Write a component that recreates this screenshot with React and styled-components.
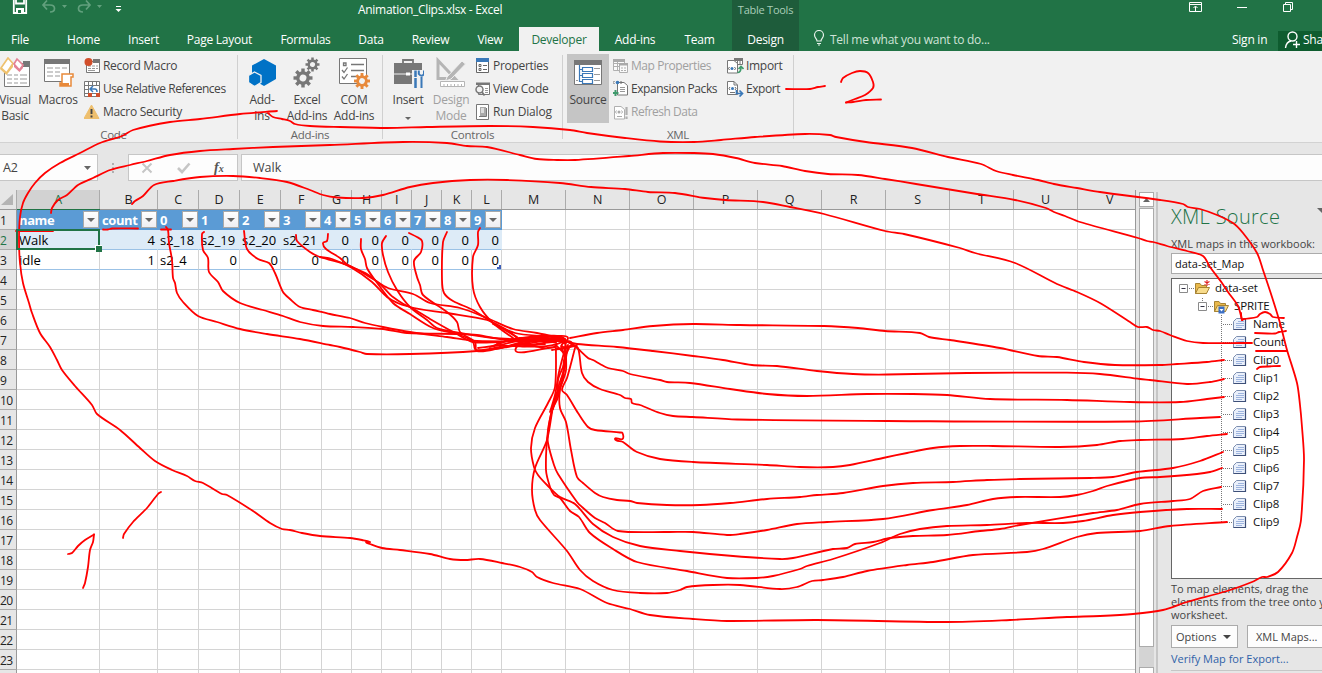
import React from "react";
import styled, { createGlobalStyle, css } from "styled-components";

const Global = createGlobalStyle`
  * { box-sizing: border-box; }
  body { margin: 0; overflow: hidden; }
`;

const UI = `"Open Sans", "Noto Sans", sans-serif`;

const Window = styled.div`
  position: relative;
  width: 1322px;
  height: 673px;
  overflow: hidden;
  display: flex;
  flex-direction: column;
  background: #e6e6e6;
  font: 12px/16px ${UI};
  letter-spacing: -0.25px;
  color: #444;
  white-space: nowrap;
`;

/* ---------- title bar and tabs ---------- */
const TitleBar = styled.div`
  display: flex;
  height: 27px;
  flex: none;
  background: #217346;
  color: #fff;
`;
const QuickAccess = styled.div`
  width: 358px;
  padding-left: 12px;
  svg { display: block; }
`;
const DocTitle = styled.div`
  width: 374px;
  padding-top: 2px;
  font-size: 12px;
  letter-spacing: -0.3px;
`;
const ToolContext = styled.div`
  width: 67px;
  padding-top: 2px;
  text-align: center;
  font-size: 11px;
  background: #1e5c3b;
  color: #a9cdb8;
`;
const WindowButtons = styled.div`
  margin-left: auto;
  width: 134px;
  svg { display: block; }
`;
const TabBar = styled.div`
  display: flex;
  height: 24px;
  flex: none;
  background: #217346;
  color: #fff;
  > * { flex: none; }
`;
const Tab = styled.div`
  width: ${(p) => p.$w}px;
  margin-left: ${(p) => p.$ml || 0}px;
  display: flex;
  justify-content: center;
  line-height: 25px;
  ${(p) => p.$active && css`background: #f1f1f1; color: #217346;`}
  ${(p) => p.$context && css`background: #1e5c3b;`}
`;
const TellMe = styled.div`
  display: flex;
  gap: 5px;
  margin-left: 14px;
  line-height: 25px;
  color: #cfe3d7;
  letter-spacing: -0.25px;
  svg { margin-top: 3px; }
`;
const SignIn = styled.div`
  margin-left: auto;
  width: 46px;
  line-height: 25px;
`;
const Share = styled.div`
  width: 44px;
  height: 20px;
  margin-top: 4px;
  padding-left: 6px;
  display: flex;
  gap: 2px;
  line-height: 17px;
  background: #0e5c2f;
  overflow: hidden;
  svg { flex: none; }
`;

/* ---------- ribbon ---------- */
const Ribbon = styled.div`
  display: flex;
  height: 92px;
  flex: none;
  background: #f1f1f1;
  border-bottom: 1px solid #d2d2d2;
`;
const Group = styled.div`
  width: ${(p) => p.$w}px;
  height: 84px;
  margin-top: 4px;
  display: flex;
  flex-direction: column;
  border-right: 1px solid #d0d0d0;
`;
const GroupBody = styled.div`
  display: flex;
  height: 71px;
  padding-left: ${(p) => p.$pl || 0}px;
  > * { flex: none; }
`;
const GroupLabel = styled.div`
  height: 13px;
  line-height: 17px;
  text-align: center;
  font-size: 11.5px;
  color: #666;
  padding-right: ${(p) => p.$pr || 0}px;
`;
const BigButton = styled.div`
  width: ${(p) => p.$w}px;
  margin-left: ${(p) => p.$ml || 0}px;
  height: ${(p) => (p.$on ? 69 : 71)}px;
  margin-top: ${(p) => (p.$on ? -1 : 0)}px;
  padding-top: ${(p) => (p.$on ? 3 : 2)}px;
  display: flex;
  flex-direction: column;
  align-items: center;
  text-align: center;
  background: ${(p) => (p.$on ? "#c5c5c5" : "none")};
  color: ${(p) => (p.$off ? "#a0a0a0" : "#444")};
  > svg { flex: none; display: block; margin-bottom: 3px; }
`;
const DropMark = styled.div`
  padding-top: 3px;
  line-height: 10px;
`;
const SmallColumn = styled.div`
  display: flex;
  flex-direction: column;
  margin-top: -1px;
  margin-left: ${(p) => p.$ml || 0}px;
  width: ${(p) => p.$w}px;
`;
const SmallButton = styled.div`
  display: flex;
  align-items: center;
  gap: 2px;
  height: 23px;
  color: ${(p) => (p.$off ? "#a0a0a0" : "#444")};
  letter-spacing: ${(p) => (p.$ls === undefined ? -0.3 : p.$ls)}px;
  svg { flex: none; }
`;

/* ---------- formula bar ---------- */
const FormulaBar = styled.div`
  display: flex;
  height: 27px;
  margin-top: 11px;
  flex: none;
  > * { flex: none; }
`;
const Box = styled.div`
  background: #fdfdfd;
  border: 1px solid #c6c6c6;
  height: 27px;
  line-height: 25px;
  font-size: 12.5px;
  display: flex;
`;
const NameBox = styled(Box)`
  width: 99px;
  margin-left: -1px;
  padding: 0 6px 0 3px;
  justify-content: space-between;
  align-items: center;
`;
const Grip = styled.div`
  width: 30px;
  padding: 8px 0 0 14px;
`;
const FormulaButtons = styled(Box)`width: 110px;`;
const FormulaInput = styled(Box)`
  margin-left: 3px;
  width: 1090px;
  padding-left: 11px;
  letter-spacing: 0;
`;

/* ---------- sheet ---------- */
const Main = styled.div`
  display: flex;
  margin-top: 9px;
  height: 483px;
  > * { flex: none; }
`;
const Sheet = styled.div`
  width: 1136px;
  height: 483px;
  border-right: 1px solid #999;
  overflow: hidden;
`;
const HeaderRow = styled.div`
  display: flex;
  height: 20px;
  border-bottom: 1px solid #999;
  background: #e6e6e6;
  > * { flex: none; }
`;
const Corner = styled.div`
  width: 17px;
  border-right: 1px solid #ababab;
  padding: 4px 0 0 1px;
  svg { display: block; }
`;
const ColHead = styled.div`
  width: ${(p) => p.$w}px;
  border-right: 1px solid #ababab;
  text-align: center;
  line-height: 20px;
  font-size: 12.5px;
  color: #222;
  ${(p) => p.$sel && css`
    background: #d2d2d2;
    color: #217346;
    box-shadow: 0 1px 0 #217346;
  `}
`;
const Row = styled.div`
  display: flex;
  height: 20px;
  > * { flex: none; }
`;
const RowHead = styled.div`
  width: 17px;
  border-right: 1px solid #999;
  border-bottom: 1px solid #ababab;
  background: ${(p) => (p.$sel ? "#d2d2d2" : "#e6e6e6")};
  color: ${(p) => (p.$sel ? "#217346" : "#222")};
  font-size: 12px;
  letter-spacing: -0.7px;
  line-height: 21px;
`;
const Cell = styled.div`
  position: relative;
  width: ${(p) => p.$w}px;
  padding: 0 2px;
  border-right: 1px solid #d4d4d4;
  border-bottom: 1px solid #d4d4d4;
  background: #fff;
  color: #000;
  font-size: 13px;
  letter-spacing: 0;
  line-height: 21px;
  text-align: ${(p) => (p.$num ? "right" : "left")};
  ${(p) => p.$kind === "head" && css`
    display: flex;
    justify-content: space-between;
    padding: 1px 1px 0 2px;
    background: #5b9bd5;
    border-color: #5b9bd5;
    color: #fff;
    font-weight: 700;
    letter-spacing: -0.4px;
    line-height: 19px;
  `}
  ${(p) => p.$kind === "band" && css`
    background: #ddebf7;
    border-right-color: #ddebf7;
    border-bottom-color: #9bc2e6;
  `}
  ${(p) => p.$kind === "last" && css`border-bottom-color: #9bc2e6;`}
`;
const FilterButton = styled.div`
  width: 16px;
  height: 17px;
  margin-right: -1px;
  flex: none;
  display: flex;
  align-items: center;
  justify-content: center;
  border: 1px solid #a9a9a9;
  background: linear-gradient(#fff, #eeeef2);
`;
const Selection = styled.div`
  position: absolute;
  z-index: 1;
  left: -1px;
  top: -1px;
  width: 84px;
  height: 21px;
  border: 2px solid #217346;
  &::after {
    content: "";
    position: absolute;
    right: -4px;
    bottom: -4px;
    width: 6px;
    height: 6px;
    background: #217346;
    border: 1px solid #fff;
    border-width: 1px 0 0 1px;
  }
`;
const TableCorner = styled.div`
  position: absolute;
  right: 0;
  bottom: 0;
  width: 4px;
  height: 4px;
  border: 2px solid #3f5fb8;
  border-left: 0;
  border-top: 0;
`;

/* ---------- scroll bar ---------- */
const ScrollBar = styled.div`
  width: 15px;
  margin: 2px 0 0 3px;
  display: flex;
  flex-direction: column;
  background: #d4d4d4;
`;
const ScrollPart = styled.div`
  flex: none;
  height: ${(p) => p.$h}px;
  margin-top: ${(p) => p.$mt || 0}px;
  border: 1px solid #ababab;
  background: #fff;
  display: flex;
  align-items: center;
  justify-content: center;
`;

/* ---------- XML pane ---------- */
const Pane = styled.div`
  margin-left: 2px;
  width: 166px;
  margin-top: 2px;
  padding-left: 13px;
  border-left: 2px solid #c6c6c6;
  overflow: hidden;
`;
const PaneTitle = styled.div`
  display: flex;
  justify-content: space-between;
  font-size: 20px;
  font-weight: 300;
  letter-spacing: 0.3px;
  line-height: 26px;
  height: 44px;
  padding-top: 12px;
  color: #217346;
  svg { flex: none; margin: -2px -5px 0 0; }
`;
const PaneLabel = styled.div`
  font-size: 11px;
  line-height: 16px;
  height: 15px;
  letter-spacing: 0;
`;
const MapSelect = styled.div`
  width: 170px;
  height: 21px;
  margin-top: 2px;
  padding-left: 3px;
  border: 1px solid #ababab;
  background: #fff;
  color: #111;
  font-size: 11px;
  line-height: 19px;
  letter-spacing: 0;
`;
const Tree = styled.div`
  width: 170px;
  height: 301px;
  margin-top: 4px;
  border: 1px solid #666;
  background: #fff;
  color: #111;
`;
const TreeRow = styled.div`
  display: flex;
  align-items: center;
  height: 18px;
  padding-left: ${(p) => p.$pl}px;
  font-size: 11.5px;
  letter-spacing: -0.1px;
  svg { flex: none; }
  span { margin-left: ${(p) => p.$gap}px; }
`;
const PaneHint = styled.div`
  margin-top: 3px;
  font-size: 11px;
  line-height: 13px;
  letter-spacing: 0;
`;
const PaneButtons = styled.div`
  display: flex;
  gap: 9px;
  margin-top: 4px;
`;
const PaneButton = styled.div`
  flex: none;
  width: ${(p) => p.$w}px;
  height: 23px;
  padding-left: ${(p) => p.$pl}px;
  display: flex;
  align-items: center;
  gap: 6px;
  border: 1px solid #ababab;
  background: #fdfdfd;
  font-size: 11px;
  letter-spacing: 0;
`;
const PaneLink = styled.div`
  margin-top: 3px;
  padding-bottom: 3px;
  border-bottom: 1px solid #c6c6c6;
  font-size: 11px;
  letter-spacing: 0;
  color: #2f62a8;
`;

const Ink = styled.svg`
  position: absolute;
  left: 0;
  top: 0;
  pointer-events: none;
  fill: none;
  stroke: #f00;
  stroke-width: 1.8;
  stroke-linecap: round;
  stroke-linejoin: round;
`;

/* ---------- icons ---------- */
const Arrow = ({ c = "#666", w = 8, h = 4 }) => (
  <svg width={w} height={h}><path d={`M0 0H${w}L${w / 2} ${h}Z`} fill={c} /></svg>
);
const QatIcons = () => (
  <svg width="120" height="20" fill="none">
    <path d="M1.8 -2V13H14.2V-2M4 -2V3.5H12V-2" stroke="#fff" strokeWidth="1.8" />
    <path d="M4 8H12V13H4Z" fill="#fff" /><path d="M6 10H9V13H6Z" fill="#217346" />
    <g stroke="#62a07d" strokeWidth="1.7">
      <path d="M31 5H38C44 5 44 12 38 12M35 0.5L31 5L35 9.5" />
      <path d="M78 5H71C65 5 65 12 71 12M74 0.5L78 5L74 9.5" />
    </g>
    <path d="M50 5H55L52.5 8ZM85 5H90L87.5 8Z" fill="#62a07d" />
    <path d="M104 6.5H109" stroke="#fff" /><path d="M103.500 9H109.500L106.500 12Z" fill="#fff" />
  </svg>
);
const WinIcons = () => (
  <svg width="134" height="20" fill="none" stroke="#fff">
    <path d="M1.500 2.500H13.500V11.500H1.500ZM1.500 4.500H13.500M7.500 11V6.500M5.500 8L7.500 6L9.500 8" />
    <path d="M49 7.500H59M95.500 4.500H102.500V11.500H95.500ZM97.500 4V2.500H104.500V9.500H103" />
  </svg>
);
const Bulb = () => (
  <svg width="12" height="16" viewBox="0 0 12 16" fill="none" stroke="#e6f1ea">
    <path d="M4 11C4 8.500 1.500 8 1.500 5A4.500 4.500 0 0 1 10.500 5C10.500 8 8 8.500 8 11Z" strokeWidth="1.200" />
    <path d="M4 13.500H8M5 15H7" strokeWidth="1.200" />
  </svg>
);
const Person = () => (
  <svg width="17" height="18" viewBox="0 0 17 18" fill="none" stroke="#fff" strokeWidth="1.400">
    <circle cx="8.500" cy="5.500" r="4.500" /><path d="M1.500 17C2 13 4 10.500 7 10M12.500 10V17M9 13.500H16" />
  </svg>
);
const VisualBasicIcon = () => (
  <svg width="36" height="32" viewBox="0 0 36 32">
    <path d="M7.500 10.500V29.500H32.500V6.500H24" fill="#fff" stroke="#7a7a7a" />
    <path d="M26 4H33V10H26Z" fill="#777" />
    <path d="M10 18H15M17 18H21M23 18H30M10 22H15M17 22H21M23 22H30M10 26H15M17 26H21M23 26H30" stroke="#999" />
    <path d="M11 1L16 6.500L9.500 16L4 11Z" fill="#fff" stroke="#eec16e" strokeWidth="1.700" />
    <path d="M4 11L9.500 16L16 6.500V10L9.500 18L3 12Z" fill="#eec16e" />
    <path d="M20 2L26 8L22.500 13L17 7Z" fill="#fff" stroke="#e48295" strokeWidth="1.700" />
    <path d="M17 7L22.500 13L26 8V11L22.500 15L17 10Z" fill="#e48295" />
  </svg>
);
const MacrosIcon = () => (
  <svg width="32" height="32" viewBox="0 0 32 32">
    <path d="M2.500 4.500H27.500V24.500H2.500Z" fill="#fff" stroke="#777" />
    <path d="M2 2H28V7H2Z" fill="#777" />
    <path d="M5 11H11M13 11H18M20 11H25M5 15H11M13 15H18M5 19H11M13 19H18" stroke="#999" />
    <path d="M20 17H31V20H29V29H18V26H20Z" fill="#fff" stroke="#e8893a" strokeWidth="1.500" />
    <path d="M18 26H27V29H18Z" fill="#e8893a" />
  </svg>
);
const RecordIcon = () => (
  <svg width="17" height="16"><path d="M2.500 3.500H15.500V14.500H2.500Z" fill="#fff" stroke="#777" /><path d="M9 1H16V5H9Z" fill="#777" /><path d="M4 8H7M8 8H11M12 8H14M4 10.500H7M8 10.500H11M12 10.500H14M4 12.500H11" stroke="#999" /><circle cx="4.500" cy="4" r="4" fill="#d24f2b" /></svg>
);
const RelativeIcon = () => (
  <svg width="17" height="16" fill="none"><path d="M.5 .5H15.500V15.500H.5ZM.5 4.500H15M.5 8.500H4M.5 12.500H15M4.500 .5V15M8.500 .5V4M12.500 .5V4" fill="#fff" stroke="#777" /><path d="M5 5H15V12H5Z" fill="#fff" /><path d="M6 8H11Q13 8 13 11M9 5L6 8L9 11" stroke="#3a78b8" strokeWidth="1.500" /><path d="M4 12H8V16H4ZM12 12H16V16H12Z" fill="#d24f2b" /></svg>
);
const WarnIcon = () => (
  <svg width="17" height="16"><path d="M7.500 1L15 14.500H0Z" fill="#eebf6e" stroke="#eebf6e" strokeLinejoin="round" /><path d="M7.500 5V10M7.500 11.500V13.500" stroke="#444" strokeWidth="1.900" /></svg>
);
const AddinsIcon = () => (
  <svg width="32" height="32" viewBox="0 0 32 32">
    <path d="M18 2L30 8.500V22L18 29L6 22V8.500Z" fill="#0072c6" />
    <path d="M8.500 15L15 18.500V25.500L8.500 29.500L2.500 25.500V18.500Z" fill="#0072c6" stroke="#f1f1f1" strokeWidth="1.300" />
  </svg>
);
const Gear = ({ x, y, r, c, hole = "#f1f1f1" }) => (
  <g transform={`translate(${x} ${y}) rotate(22.5)`}>
    {[0, 45, 90, 135].map((a) => (
      <path key={a} d={`M${-r} 0H${r}`} transform={`rotate(${a + 22.5})`} stroke={c} strokeWidth={r * 0.36} />
    ))}
    <circle r={r * 0.72} fill={c} /><circle r={r * 0.36} fill={hole} />
  </g>
);
const GearsIcon = () => (
  <svg width="32" height="32" viewBox="0 0 32 32"><Gear x={12} y={21} r={9.500} c="#777" /><Gear x={21.500} y={7.500} r={7} c="#777" /></svg>
);
const ComIcon = () => (
  <svg width="32" height="32" viewBox="0 0 32 32" fill="none">
    <path d="M1.500 1.500H28.500V26.500H1.500Z" fill="#fff" stroke="#777" />
    <path d="M5.500 6H8V8.500H5.500ZM13 7.500H26M13 13.500H26M13 19.500H20M4 13L6 15.500L9.500 10.500M4 19.500L6 22L9.500 17" stroke="#777" strokeWidth="1.300" />
    <Gear x={24} y={24} r={8} c="#e8893a" />
  </svg>
);
const InsertIcon = () => (
  <svg width="32" height="32" viewBox="0 0 32 32" fill="none">
    <path d="M11 6V3H21V6" stroke="#777" strokeWidth="1.800" />
    <path d="M2 6H30V27H2Z" fill="#777" /><path d="M2 17H14M18 17H22" stroke="#f1f1f1" /><path d="M14 15.500H18V18.500H14Z" fill="#fff" />
    <path d="M20 13H32V31H20Z" fill="#f1f1f1" />
    <path d="M23.500 13.500V20M23.500 21V31" stroke="#3a78b8" strokeWidth="2.500" /><path d="M29.500 20V31M26.800 13.500V17Q29.500 20.500 32 17V13.500" stroke="#3a78b8" strokeWidth="2" />
  </svg>
);
const DesignIcon = () => (
  <svg width="32" height="32" viewBox="0 0 32 32" fill="none">
    <path d="M3 3.500V21.500H20Z" stroke="#b5b5b5" strokeWidth="3" />
    <path d="M12 20L27 4L30.500 7L16 22L10.500 24Z" fill="#b5b5b5" stroke="#f1f1f1" />
    <path d="M5.500 24.500H29.500V29.500H5.500ZM9 27V29M12.500 27V29M16 27V29M19.500 27V29M23 27V29M26.500 27V29" fill="#fff" stroke="#b5b5b5" />
  </svg>
);
const PropsIcon = () => (
  <svg width="16" height="16"><path d="M1.500 2.500H13.500V14.500H1.500Z" fill="#fff" stroke="#666" /><path d="M1 0H14V4H1Z" fill="#3a78b8" /><path d="M4 6.500H6V8.500H4ZM4 10.500H6V12.500H4ZM8 7.500H12M8 11.500H12" fill="none" stroke="#666" /></svg>
);
const CodeIcon = () => (
  <svg width="16" height="16" fill="none"><path d="M3.500 3.500H14.500V13.500H3.500Z" fill="#fff" stroke="#777" /><path d="M1 1.500H15V4H1Z" fill="#777" /><path d="M10 7.500H13M10 9.500H13M10 11.500H13" stroke="#999" /><circle cx="4.500" cy="8.500" r="3.500" fill="#f1f1f1" stroke="#777" strokeWidth="1.500" /><path d="M7 11L9.500 14.500" stroke="#777" strokeWidth="1.800" /></svg>
);
const RunIcon = () => (
  <svg width="16" height="16"><path d="M1.500 .5H13.500V15.500H1.500Z" fill="#fff" stroke="#777" /><path d="M5 3H11V13H5Z" fill="#aaa" /><path d="M6 4H9V9H6Z" fill="#ddd" /><path d="M4 12.500H11.500V4" fill="none" stroke="#777" /></svg>
);
const SourceIcon = () => (
  <svg width="32" height="32" viewBox="0 0 32 32" fill="none">
    <path d="M2.500 5.500H29.500V27.500H2.500Z" fill="#fff" stroke="#777" /><path d="M2 3H30V8H2Z" fill="#777" />
    <path d="M22 11.500H28M22 17.500H28M22 23.500H28M4 23.500H6" stroke="#999" />
    <path d="M7.500 8V24.500H10M7.500 12.500H10M7.500 18.500H10M10.500 10.500H20.500V14.500H10.500ZM10.500 16.500H20.500V20.500H10.500ZM10.500 22.500H20.500V26.500H10.500Z" stroke="#3a78b8" strokeWidth="1.200" />
  </svg>
);
const MapPropsIcon = () => (
  <svg width="16" height="16" fill="none" stroke="#b0b0b0"><path d="M.5 1.500H11.500V12.500H.5ZM.5 8.500H11M.5 5.500H11M4.500 1V12" fill="#fafafa" /><path d="M0 1H12V4H0Z" fill="#aaa" stroke="none" /><path d="M6.500 5.500H14.500V14.500H6.500Z" fill="#fafafa" /><path d="M6 5H15V7.500H6Z" fill="#aaa" stroke="none" /><path d="M8 10H10M11 10H13M8 12.500H10M11 12.500H13" /></svg>
);
const Page = ({ x = 1, c = "#777" }) => (
  <path d={`M${x}.500 2.500H${x + 7}L${x + 10}.500 5.500V15H${x}.500Z`} fill="#fff" stroke={c} />
);
const ExpansionIcon = () => (
  <svg width="16" height="17" fill="none"><Page x={4} /><path d="M7 7.500H12M7 9.500H12M7 11.500H12" stroke="#999" /><circle cx="4.500" cy="2.500" r="1.800" fill="#3a78b8" /><path d="M1.500 1L0 2.500L1.500 4M7.500 1L9 2.500L7.500 4" stroke="#666" /><path d="M2.500 10V16M-.5 13H5.500" stroke="#3f9a6c" strokeWidth="2" /></svg>
);
const RefreshIcon = () => (
  <svg width="16" height="16" fill="none"><Page x={1} c="#b0b0b0" /><circle cx="6" cy="8" r="1.500" fill="#aaa" /><path d="M3.500 6.500L2.500 8L3.500 9.500M8.500 6.500L9.500 8L8.500 9.500M4 12.500H9" stroke="#aaa" /><path d="M13.500 3V11M13.500 12.500V15" stroke="#b0b0b0" strokeWidth="2.200" /></svg>
);
const ImportIcon = () => (
  <svg width="17" height="16" fill="none"><path d="M7.500 .5H15.500V6.500H7.500ZM10.500 1V6M13 1V6" fill="#fff" stroke="#777" /><path d="M7 0H16V3H7Z" fill="#777" /><Page x={0} /><circle cx="5" cy="10.500" r="1.500" fill="#3a78b8" /><path d="M2.500 9L1.500 10.500L2.500 12M7.500 9L8.500 10.500L7.500 12" stroke="#666" /><path d="M10.500 14.500Q14 14.500 14 9M11.500 11L14 8.500L16.500 11" stroke="#3f9a6c" strokeWidth="1.600" /></svg>
);
const ExportIcon = () => (
  <svg width="17" height="16" fill="none"><path d="M.5 .5H7L10.500 4V13.500H.5Z" fill="#fff" stroke="#777" /><path d="M7 .5V4H10.500M3 11.500H8" stroke="#777" /><circle cx="5.500" cy="7.500" r="1.500" fill="#3a78b8" /><path d="M3 6L2 7.500L3 9M8 6L9 7.500L8 9" stroke="#666" /><path d="M9.500 9V12.500H15M12.500 9.500L15.500 12.500L12.500 15.500" stroke="#3a78b8" strokeWidth="1.700" /></svg>
);
const FxIcons = () => (
  <svg width="108" height="25" fill="none">
    <path d="M13.500 8.500L22.500 17.500M22.500 8.500L13.500 17.500" stroke="#c6c6c6" strokeWidth="2" />
    <path d="M49 13L53 17L60.500 8.500" stroke="#c6c6c6" strokeWidth="2.600" />
    <text x="85" y="16.500" fill="#555" stroke="none" fontFamily="Liberation Serif, serif" fontStyle="italic" fontWeight="bold" fontSize="14" letterSpacing="0">f<tspan fontSize="10" dx="0">x</tspan></text>
  </svg>
);
const Folder = ({ mark }) => (
  <svg width="17" height="16" viewBox="0 0 17 16">
    <path d="M1.500 13.500V3.500H6L7.500 5.500H12.500V13.500Z" fill="#e9b94c" stroke="#a88434" />
    <path d="M1.500 13.500L4.500 7.500H15.500L12.500 13.500Z" fill="#f8dc8c" stroke="#a88434" />
    {mark === "star" && <path d="M13 0V6M10.500 1.500L15.500 4.500M15.500 1.500L10.500 4.500" stroke="#e02020" strokeWidth="1.100" />}
    {mark === "rep" && <g><path d="M5.500 8.500H11.500V15.500H5.500Z" fill="#3c6fc4" /><path d="M6.500 11H10.500L8.500 13.500Z" fill="#fff" /></g>}
  </svg>
);
const NodeIcon = () => (
  <svg width="14" height="12" viewBox="0 0 14 12"><path d="M3.500 .5H12.500V11.500H.5V3.500Z" fill="#eaf0fb" stroke="#7d8fb0" /><path d="M.5 11.500H12.500V1" fill="none" stroke="#3d4f78" strokeWidth="1.200" /><path d="M5 3.500H11M3 5.500H11M3 7.500H11M3 9.500H9" stroke="#9db4de" /></svg>
);
const Expander = ({ pre }) => (
  <svg width="15" height="18"><path d="M.5 5.500H8.500V13.500H.5Z" fill="#fff" stroke="#8a8a8a" /><path d="M2.500 9.500H6.500" stroke="#334" /><path d="M10 9.500H15" stroke="#777" strokeDasharray="1 1" />{pre && <path d="M4.500 -1V5" stroke="#777" strokeDasharray="1 1" />}</svg>
);
const Branch = ({ last }) => (
  <svg width="12" height="18"><path d={`M.5 0V${last ? 10 : 18}M2 9.500H11`} stroke="#777" strokeDasharray="1 1" /></svg>
);

/* ---------- data ---------- */
const columns = [
  ["A", 83], ["B", 58], ["C", 41], ["D", 41], ["E", 41], ["F", 41],
  ["G", 30], ["H", 30], ["I", 30], ["J", 30], ["K", 30], ["L", 30],
  ["M", 64], ["N", 64], ["O", 64], ["P", 64], ["Q", 64], ["R", 64],
  ["S", 64], ["T", 64], ["U", 64], ["V", 64],
];
const data = {
  1: ["name", "count", "0", "1", "2", "3", "4", "5", "6", "7", "8", "9"],
  2: ["Walk", 4, "s2_18", "s2_19", "s2_20", "s2_21", 0, 0, 0, 0, 0, 0],
  3: ["idle", 1, "s2_4", 0, 0, 0, 0, 0, 0, 0, 0, 0],
};
const kinds = { 1: "head", 2: "band", 3: "last" };
const nodes = ["Name", "Count", "Clip0", "Clip1", "Clip2", "Clip3", "Clip4", "Clip5", "Clip6", "Clip7", "Clip8", "Clip9"];
const tabs = [
  ["File", 40], ["Home", 59, 14], ["Insert", 61], ["Page Layout", 91], ["Formulas", 81],
  ["Data", 50], ["Review", 69], ["View", 50], ["Developer", 80, 4], ["Add-ins", 68, 2],
  ["Team", 61], ["Design", 67, 2],
];

/* Pen strokes, each a list of x,y pairs. */
const strokes = [
  "277,111 240,114 200,119 170,122 133,130 122,136 100,143 80,153 60,163 45,173 35,183 28,193 23,203 20,217 19,240 20,263 23,283 29,303 32,313 40,333 50,347 57,360 62,370 75,386 92,405 97,414 120,430 140,448 155,461 172,470 187,476 195,481 203,483 222,494 227,495 253,511 270,523 282,529 290,530 302,533 320,536 350,538 362,540 370,542 366,542 370,544 382,548 400,550 430,554 450,559 465,560 480,559 502,563 520,567 532,572 537,577 553,583 580,589 607,603 630,609 650,615 693,619 727,621 817,620 947,622 1010,620 1067,617 1100,616 1133,614 1163,610 1187,602 1227,591 1252,582 1262,577 1267,577 1278,572 1292,553 1297,537 1301,520 1304,460 1302,427 1300,405 1297,383 1287,350 1280,323 1272,297 1263,270 1257,253 1243,233 1233,223 1217,215 1200,209 1188,207 1183,204 1160,200 1100,192 1077,188 1054,184 1038,180 1013,175 996,171 981,164 948,157 912,148 866,142 836,137 830,135 805,134 755,137 721,140 694,142 660,141.5 625,138 587,133 570,130 533,127 490,126 427,127 387,128 340,127 310,126 295,124 290,121 282,119 273,117 268,113",
  "51,213 52,208 58,200 67,195 78,185 93,178 110,170 130,165 147,161 170,155 200,151 233,149 273,147 330,145 403,142 447,143 467,146 487,147 520,155 537,159 557,160 575,160 629,156 663,153 694,153 713,154 736,158 755,163 782,166 805,171 828,174 858,175 885,179 916,184 977,194 1015,200 1046,208 1054,212 1065,216 1080,222 1138,238 1147,241 1153,242 1167,246 1187,251 1203,256 1210,267 1222,283 1228,292 1238,306 1242,320",
  "1241,313 1242,320 1244,319 1257,317 1260,314 1265,312 1270,314 1273,317 1284,318",
  "132,204 135,201 143,196 154,185 173,181 200,177 233,176 260,178 287,182 310,190 323,195 337,197.5 363,198 383,195 410,187 433,183 470,180 507,180 560,183 591,187 625,189 648,192 675,193 705,198 725,200 763,202 790,207 824,214 885,231 904,234 960,248 975,253 1015,263 1057,284 1077,292 1100,303 1130,322 1138,327 1147,327 1153,330 1160,331 1170,335 1187,341 1203,343 1242,343 1252,343",
  "1255,333 1275,333.5 1279,332 1286,331",
  "1256,351 1287,351",
  "1257,369 1260,367 1280,366",
  "16,231 53,231", "103,229.5 108,229.5 112,228.5 138,228.5", "161,229.5 171,229.5",
  "166,227 168,230 169,243 172,260 173,278 175,283 177,293 183,302 198,316 217,322 240,329 267,334 300,339 330,345 340,347 360,352 367,354 410,354 477,351 507,347 560,338",
  "204,232 202,234 203,250 208,258 209,272 218,282 223,291 240,303 263,310 283,316 300,322 323,326 353,327 383,329 407,333 460,334 477,335 507,340 560,340",
  "244,231 247,249 258,259 269,263 275,273 283,292 290,299 300,307 313,310 330,314 350,318 365,323 383,327 410,332 447,337 477,341 560,341",
  "296,235 297,241 310,252 320,257 350,266 373,279 388,288 413,294 430,303 460,308 487,318 513,329 537,333 565,339",
  "328,234 327,241 323,243 326,249 340,258 348,265 367,274 382,286 393,297 410,307 447,313 487,320 507,330 517,338",
  "320,257 332,259 352,268 372,282 387,297 400,304 410,307 430,319 455,333 473,342 500,342",
  "361,239 361,249 365,259 367,268 375,280 393,303 410,314 433,328 460,335 473,342 476,350 500,347",
  "386,236 382,243 383,255 388,272 397,290 410,307 427,320 437,328 460,333 493,338 550,340",
  "409,233 417,237 422,241 421,252 414,261 417,277 420,285 423,295 447,312 457,322 460,332 475,342 477,351 500,348 530,342",
  "447,232 443,242 442,280 444,293 453,301 473,310 493,323 517,337",
  "480,228 478,232 478,245 473,257 473,288 480,307 493,323 513,338",
  "478,348 500,345 540,336 564,340", "490,347 520,338 560,343 500,346", "497,343 530,337 560,338 520,342 556,345 516,348 555,347",
  "493,324 515,333 540,336 562,337 566,343 550,339 520,344 545,344", "505,340 558,341 572,344 556,349",
  "500,348 535,339 560,336 568,338 562,346 575,346", "552,350 566,348 577,345",
  "570,338 597,333 623,330 653,326 693,324 740,325 824,326 858,328 885,331 920,333 929,337 950,340 1000,348 1038,356 1057,357 1084,362 1115,365 1160,365 1177,364 1207,362 1224,360",
  "568,342 577,344 617,347 653,351 693,356 723,360 752,365 777,366 817,371 853,374 887,374.5 967,373 1067,372.7 1100,374 1140,379 1150,380 1187,384 1210,382 1224,379",
  "568,342 577,348 588,358 593,360 600,364 608,368 623,371 630,374 660,380 667,382 690,383 730,389 767,394 807,396 867,394 913,394 947,395 990,399 1067,400 1130,402 1180,402 1207,399 1224,397",
  "572,344 578,348 582,373 588,382 600,389 620,395 625,398 631,399 632,403 640,405 660,413 673,416 693,417 737,419.5 887,421 1133,421.5 1200,418 1220,417",
  "575,348 567,378 562,390 567,395 578,413 588,427 595,430 620,432.5 622.5,433 622.5,439 615,439 623,442 637,452 660,459 693,462 767,465 800,467 833,467 850,465 883,458 907,453 933,448 960,446 993,446 1060,447 1097,445 1120,441 1140,440 1183,439 1207,436 1227,434",
  "565,340 566,370 560,390 560,408 566,422 571,450 577,477 583,483 595,493 603,497 617,500 630,501 637,503 667,505 700,505 730,503 767,499 800,497 817,495 843,493 883,486 913,483 953,482 987,480 1020,479 1090,478 1113,477 1137,472 1173,468 1200,461 1223,452",
  "561,346 565,360 558,380 558,397 552,410 548,433 548,443 554,465 558,474 577,502 582,507 595,518 605,523 618,531 667,532 693,532 727,535 740,534 767,530 797,524 827,522 883,519 933,510 967,505 993,499 1017,497 1060,497 1077,495 1093,491 1107,486 1140,478 1160,477 1197,474 1210,472 1222,468",
  "556,345 555,387 548,403 535,428 531,448 534,467 538,475 548,486 560,497 575,504 593,524 613,537 640,546 680,551 733,556 780,559 793,558 833,549 847,548 855,544 873,542 890,538 913,536 947,535 980,531 1000,529 1020,525 1093,513 1117,510 1140,504 1173,501 1190,499 1203,491 1221,487",
  "568,345 562,380 553,407 548,430 546,470 550,487 554,495 560,498 570,511 579,517 590,533 613,549 637,562 687,571 727,578 757,578 773,576 800,569 807,566 833,559 880,543 900,534 920,529 947,526 987,525 1027,523 1063,523 1083,521 1113,515 1140,512 1187,509 1222,509",
  "556,345 566,358 559,385 553,407 547,440 535,468 532,490 535,510 540,520 567,551 580,570 593,581 613,590 640,593 667,593 680,590 687,587 713,585 740,585 780,589 797,587 812,581 823,580 843,577 867,571 907,565 933,562 973,555 1027,552 1043,549 1077,537 1097,533 1140,531 1170,526 1227,522",
  "566,345 559,372 555,395 550,412", "570,346 564,360 563,378 557,395 553,409",
  "68,554 72,553 78,546 85,540 94,534.5",
  "94,534.5 93,542 90,550 88,567 85,583 83,588",
  "123,538 124,534 133,522 147,508 158,494 161,492",
  "786,89 810,89 818,87 825,86",
  "841,82 843,78 852,73 860,71 868,73 873,82 873,88 865,95 855,99 846,102.500",
  "846,102.500 853,102 866,100 881,99.500",
];
/* Rounds a stroke slightly at its inner points, keeping the corners tight. */
const toPath = (s) => {
  const p = s.split(" ").map((q) => q.split(",").map(Number));
  let d = `M${p[0]}`;
  for (let i = 0; i < p.length - 1; i++) {
    const a = p[i - 1] || p[i], b = p[i], c = p[i + 1], e = p[i + 2] || c;
    const len = Math.hypot(c[0] - b[0], c[1] - b[1]);
    const t = (u, v) => {
      const m = Math.hypot(v[0] - u[0], v[1] - u[1]) || 1;
      return [((v[0] - u[0]) / m) * len * 0.3, ((v[1] - u[1]) / m) * len * 0.3];
    };
    const t1 = t(a, c), t2 = t(b, e);
    d += `C${b[0] + t1[0]} ${b[1] + t1[1]} ${c[0] - t2[0]} ${c[1] - t2[1]} ${c[0]} ${c[1]}`;
  }
  return d;
};

const Small = ({ icon, off, ls, children }) => (
  <SmallButton $off={off} $ls={ls}>{icon}{children}</SmallButton>
);

export default function App() {
  return (
    <Window>
      <Global />
      <TitleBar>
        <QuickAccess><QatIcons /></QuickAccess>
        <DocTitle>Animation_Clips.xlsx - Excel</DocTitle>
        <ToolContext>Table Tools</ToolContext>
        <WindowButtons><WinIcons /></WindowButtons>
      </TitleBar>
      <TabBar>
        {tabs.map(([t, w, ml]) => (
          <Tab key={t} $w={w} $ml={ml} $active={t === "Developer"} $context={t === "Design"}>{t}</Tab>
        ))}
        <TellMe><Bulb />Tell me what you want to do...</TellMe>
        <SignIn>Sign in</SignIn>
        <Share><Person />Share</Share>
      </TabBar>

      <Ribbon>
        <Group $w={238}>
          <GroupBody>
            <BigButton $w={36} $ml={-3}><VisualBasicIcon /><span>Visual</span><span>Basic</span></BigButton>
            <BigButton $w={42} $ml={4}><MacrosIcon />Macros</BigButton>
            <SmallColumn $ml={5} $w={150}>
              <Small icon={<RecordIcon />}>Record Macro</Small>
              <Small icon={<RelativeIcon />} ls={-0.47}>Use Relative References</Small>
              <Small icon={<WarnIcon />}>Macro Security</Small>
            </SmallColumn>
          </GroupBody>
          <GroupLabel $pr={10}>Code</GroupLabel>
        </Group>
        <Group $w={145}>
          <GroupBody $pl={2}>
            <BigButton $w={44}><AddinsIcon /><span>Add-</span><span>ins</span></BigButton>
            <BigButton $w={46}><GearsIcon /><span>Excel</span><span>Add-ins</span></BigButton>
            <BigButton $w={48}><ComIcon /><span>COM</span><span>Add-ins</span></BigButton>
          </GroupBody>
          <GroupLabel>Add-ins</GroupLabel>
        </Group>
        <Group $w={180}>
          <GroupBody $pl={5}>
            <BigButton $w={40}><InsertIcon />Insert<DropMark><Arrow w={6} h={3} /></DropMark></BigButton>
            <BigButton $w={40} $ml={3} $off><DesignIcon /><span>Design</span><span>Mode</span></BigButton>
            <SmallColumn $ml={4} $w={90}>
              <Small icon={<PropsIcon />}>Properties</Small>
              <Small icon={<CodeIcon />}>View Code</Small>
              <Small icon={<RunIcon />} ls={-0.15}>Run Dialog</Small>
            </SmallColumn>
          </GroupBody>
          <GroupLabel>Controls</GroupLabel>
        </Group>
        <Group $w={231}>
          <GroupBody $pl={4}>
            <BigButton $w={42} $on><SourceIcon />Source</BigButton>
            <SmallColumn $ml={4} $w={114}>
              <Small icon={<MapPropsIcon />} off ls={-0.42}>Map Properties</Small>
              <Small icon={<ExpansionIcon />} ls={-0.42}>Expansion Packs</Small>
              <Small icon={<RefreshIcon />} off ls={-0.5}>Refresh Data</Small>
            </SmallColumn>
            <SmallColumn $w={60}>
              <Small icon={<ImportIcon />}>Import</Small>
              <Small icon={<ExportIcon />} ls={-0.45}>Export</Small>
            </SmallColumn>
          </GroupBody>
          <GroupLabel>XML</GroupLabel>
        </Group>
      </Ribbon>

      <FormulaBar>
        <NameBox>A2<Arrow w={7} /></NameBox>
        <Grip><svg width="3" height="11"><path d="M0 0H2V2H0ZM0 4H2V6H0ZM0 8H2V10H0Z" fill="#b0b0b0" /></svg></Grip>
        <FormulaButtons><FxIcons /></FormulaButtons>
        <FormulaInput>Walk</FormulaInput>
      </FormulaBar>

      <Main>
        <Sheet>
          <HeaderRow>
            <Corner><svg width="13" height="12"><path d="M12 0V11H0Z" fill="#b4b4b4" /></svg></Corner>
            {columns.map(([c, w], i) => <ColHead key={c} $w={w} $sel={i === 0}>{c}</ColHead>)}
          </HeaderRow>
          {Array.from({ length: 24 }, (_, r) => r + 1).map((r) => (
            <Row key={r}>
              <RowHead $sel={r === 2}>{r < 24 ? r : null}</RowHead>
              {columns.map(([c, w], i) => {
                const v = data[r] && data[r][i];
                return (
                  <Cell key={c} $w={w} $kind={i < 12 ? kinds[r] : undefined} $num={typeof v === "number"}>
                    {v}
                    {r === 1 && i < 12 && <FilterButton><Arrow /></FilterButton>}
                    {r === 2 && i === 0 && <Selection />}
                    {r === 3 && i === 11 && <TableCorner />}
                  </Cell>
                );
              })}
            </Row>
          ))}
        </Sheet>
        <ScrollBar>
          <ScrollPart $h={15}><svg width="7" height="4"><path d="M0 4H7L3.500 0Z" fill="#666" /></svg></ScrollPart>
          <ScrollPart $h={439} $mt={1} />
          <ScrollPart $h={20} $mt={20}><Arrow w={7} /></ScrollPart>
        </ScrollBar>
        <Pane>
          <PaneTitle>XML Source<svg width="10" height="20"><path d="M0 6H10L5 11Z" fill="#666" /></svg></PaneTitle>
          <PaneLabel>XML maps in this workbook:</PaneLabel>
          <MapSelect>data-set_Map</MapSelect>
          <Tree>
            <TreeRow $pl={7} $gap={4}><Expander /><Folder mark="star" /><span>data-set</span></TreeRow>
            <TreeRow $pl={26} $gap={4}><Expander pre /><Folder mark="rep" /><span>SPRITE</span></TreeRow>
            {nodes.map((n, i) => (
              <TreeRow key={n} $pl={49} $gap={6}><Branch last={i === 11} /><NodeIcon /><span>{n}</span></TreeRow>
            ))}
          </Tree>
          <PaneHint>To map elements, drag the<br />elements from the tree onto your<br />worksheet.</PaneHint>
          <PaneButtons>
            <PaneButton $w={67} $pl={4}>Options<Arrow c="#444" /></PaneButton>
            <PaneButton $w={90} $pl={8}>XML Maps...</PaneButton>
          </PaneButtons>
          <PaneLink>Verify Map for Export...</PaneLink>
        </Pane>
      </Main>

      <Ink width="1322" height="673">
        {strokes.map((s, i) => <path key={i} d={toPath(s)} />)}
      </Ink>
    </Window>
  );
}
